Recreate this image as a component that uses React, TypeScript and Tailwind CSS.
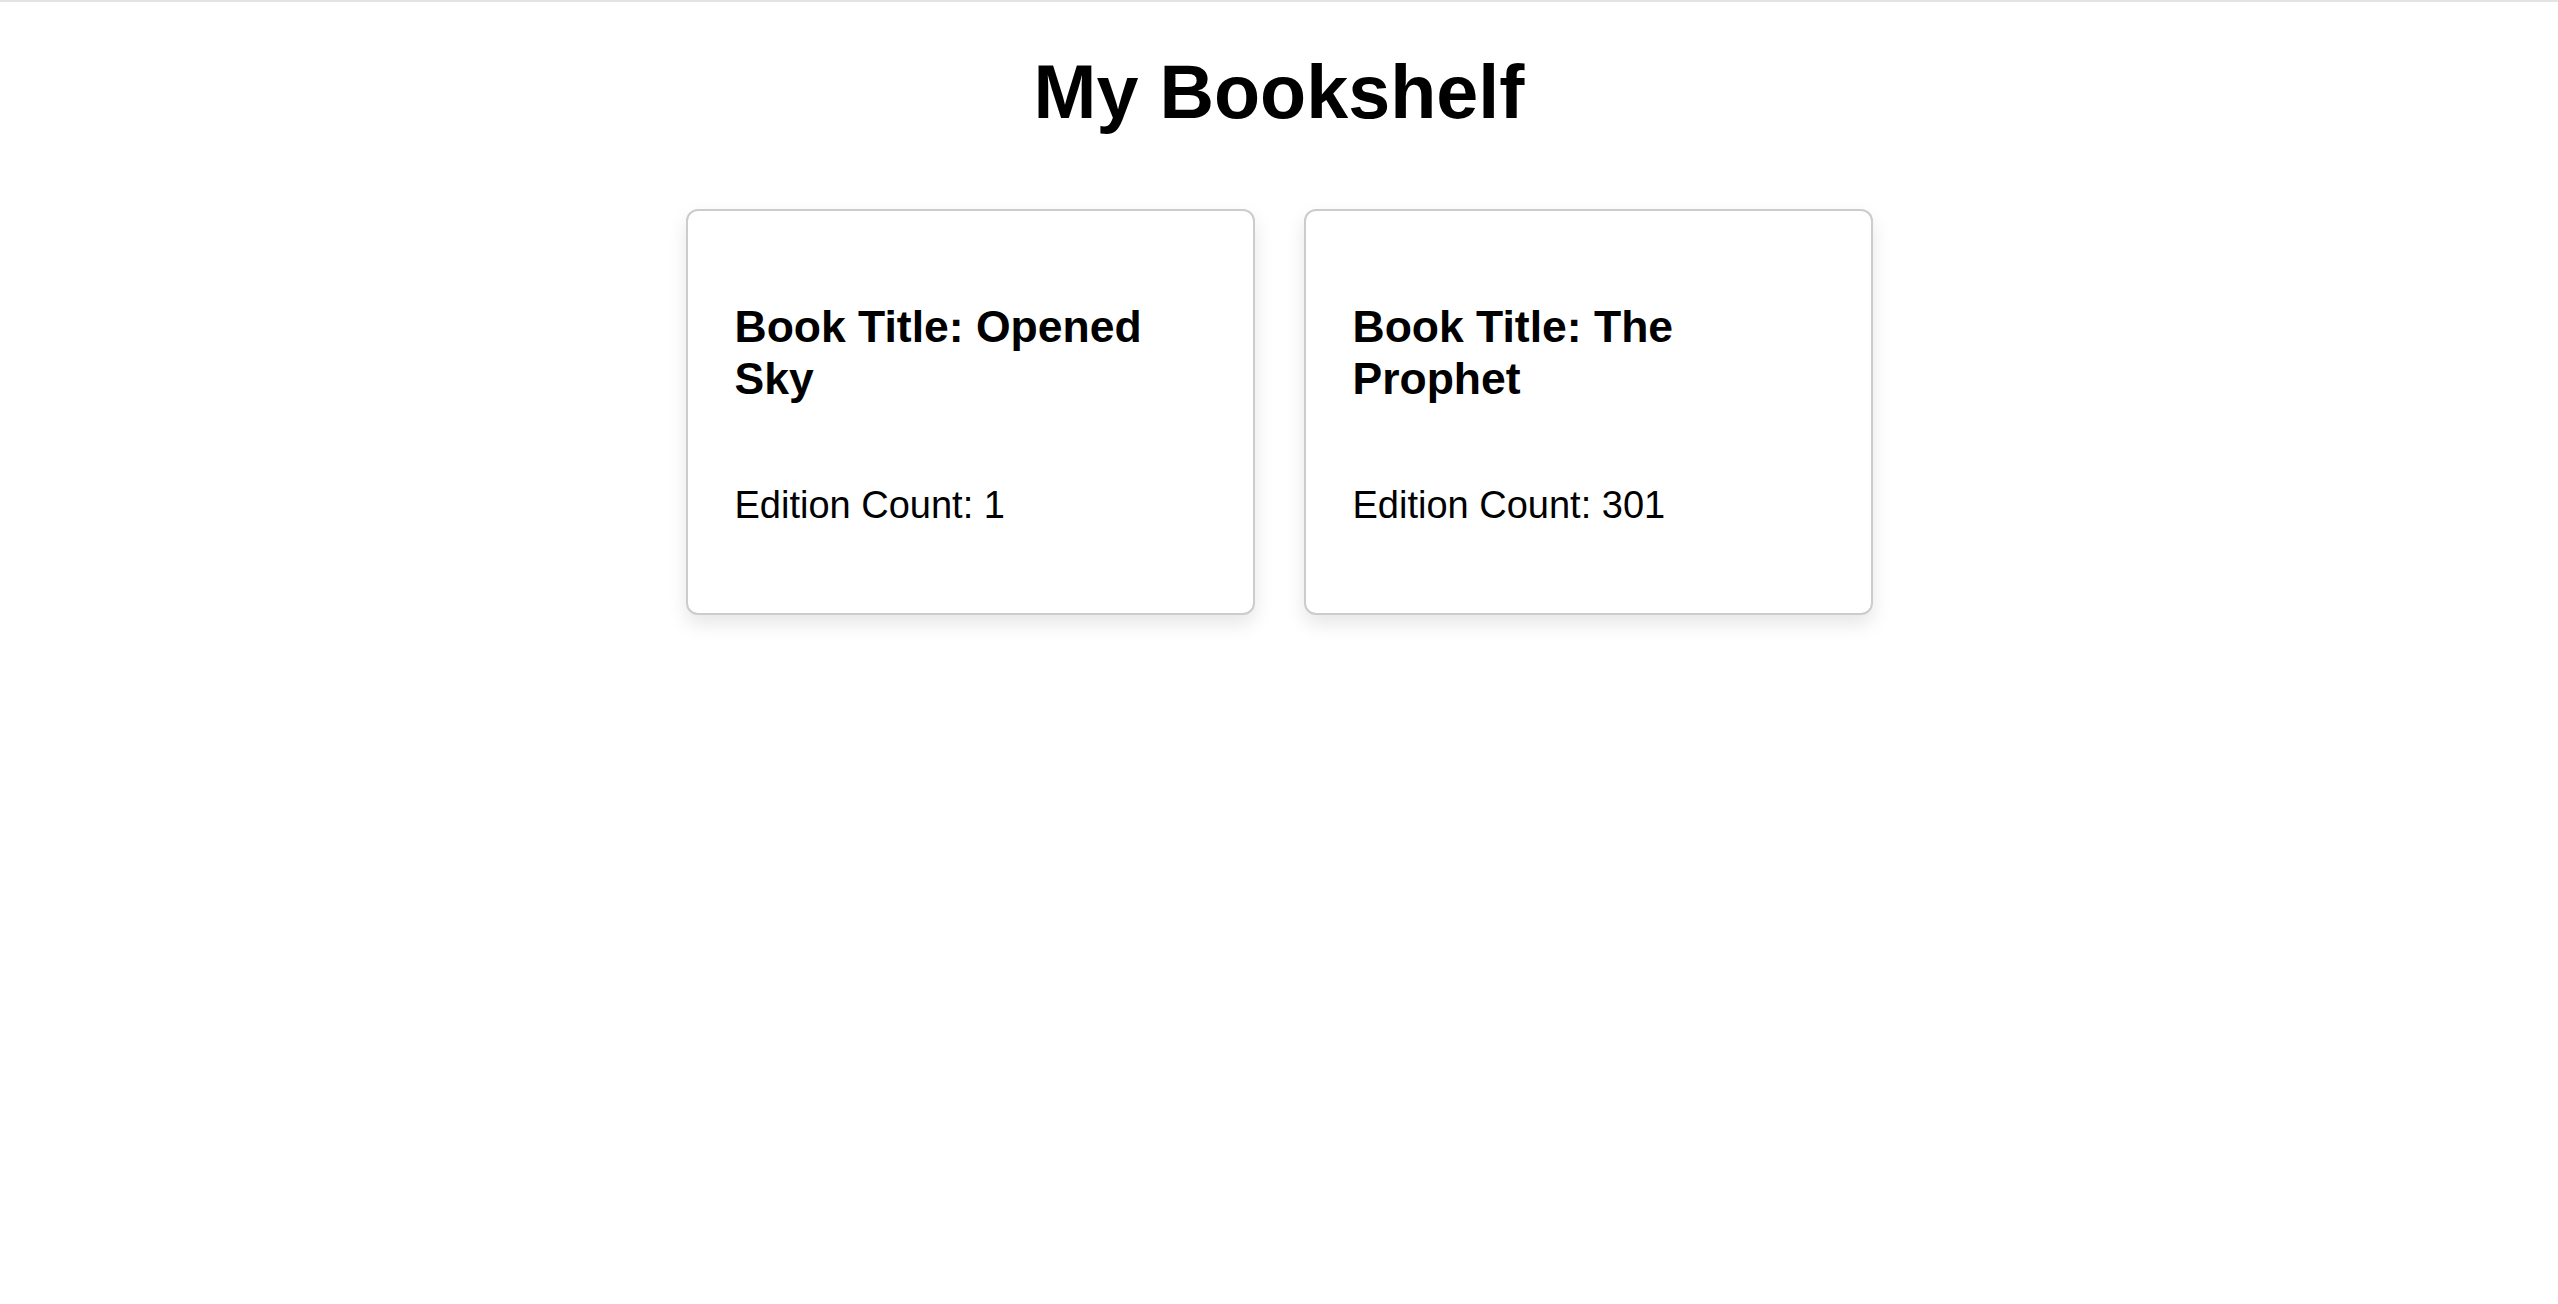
const books = [
  { title: "Opened Sky", editions: 1 },
  { title: "The Prophet", editions: 301 },
];

function BookCard({ title, editions }: { title: string; editions: number }) {
  return (
    <div className="flex flex-col w-[569px] border-2 border-[#cccccc] rounded-[12px] bg-white p-[47px] shadow-[0_9px_19px_rgba(0,0,0,0.1)]">
      <h3 className="mt-[43px] mb-[44px] text-[44.5px] leading-[51.5px] font-bold text-black">
        {`Book Title: ${title}`}
      </h3>
      <p className="mt-[36px] mb-[38px] text-[38px] leading-[43.7px] text-black">
        {`Edition Count: ${editions}`}
      </p>
    </div>
  );
}

export default function App() {
  return (
    <div className="min-h-[1304px] bg-white border-t-2 border-[#e3e3e3] font-['Liberation_Sans',Arial,sans-serif]">
      <h1 className="mt-[48px] text-center text-[75.5px] leading-[84px] font-bold text-black">
        My Bookshelf
      </h1>

      <div className="mt-[75px] flex justify-center gap-[49px]">
        {books.map((b) => (
          <BookCard key={b.title} title={b.title} editions={b.editions} />
        ))}
      </div>
    </div>
  );
}
